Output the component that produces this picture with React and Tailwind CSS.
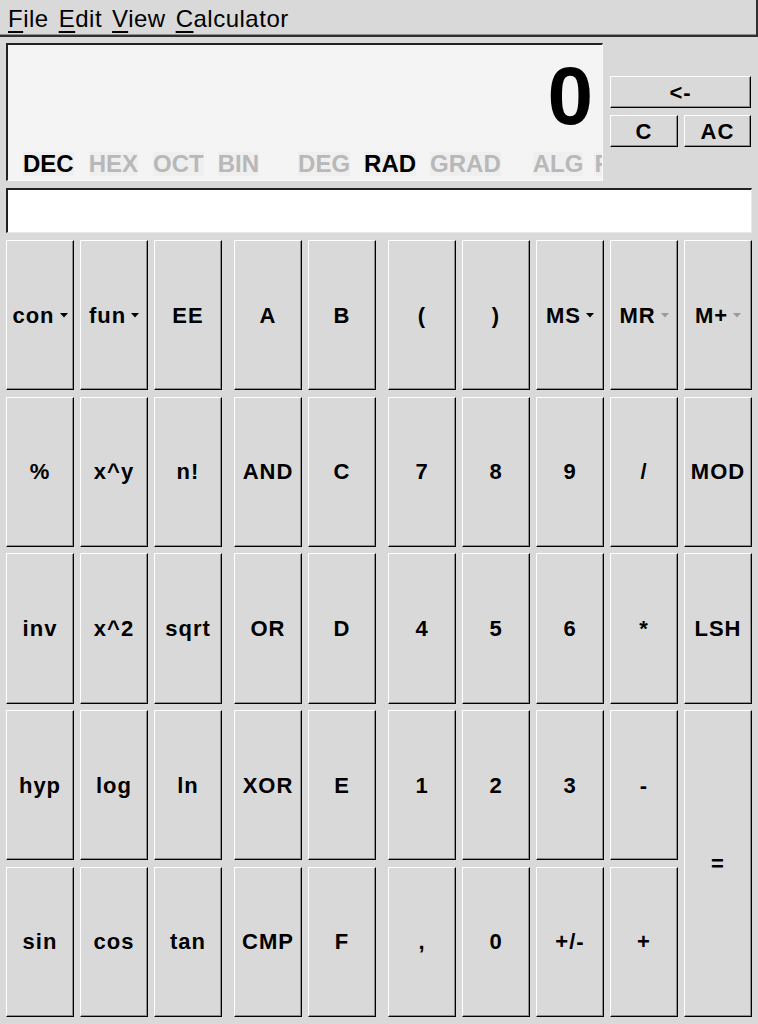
import React from "react";

const Tri = ({ gray }) => (
  <svg width="8" height="5" viewBox="0 0 8 5" className="ml-[5px] mt-[1px]">
    <path d="M0 0 L8 0 L4 4.5 Z" fill={gray ? "#9a9a9a" : "#000"} />
  </svg>
);

const btnBase =
  "flex items-center justify-center bg-[#d9d9d9] border-t border-l border-t-white border-l-white border-b border-r border-b-black border-r-black shadow-[inset_-1px_-1px_0_#8c8c8c] text-[22px] font-bold text-black tracking-[1px]";

const keys = [
  // row 1
  { t: "con", c: "col-start-1 row-start-1", tri: "b" },
  { t: "fun", c: "col-start-2 row-start-1", tri: "b" },
  { t: "EE", c: "col-start-3 row-start-1" },
  { t: "A", c: "col-start-5 row-start-1" },
  { t: "B", c: "col-start-6 row-start-1" },
  { t: "(", c: "col-start-8 row-start-1" },
  { t: ")", c: "col-start-9 row-start-1" },
  { t: "MS", c: "col-start-10 row-start-1", tri: "b" },
  { t: "MR", c: "col-start-11 row-start-1", tri: "g" },
  { t: "M+", c: "col-start-12 row-start-1", tri: "g" },
  // row 2
  { t: "%", c: "col-start-1 row-start-2" },
  { t: "x^y", c: "col-start-2 row-start-2" },
  { t: "n!", c: "col-start-3 row-start-2" },
  { t: "AND", c: "col-start-5 row-start-2" },
  { t: "C", c: "col-start-6 row-start-2" },
  { t: "7", c: "col-start-8 row-start-2" },
  { t: "8", c: "col-start-9 row-start-2" },
  { t: "9", c: "col-start-10 row-start-2" },
  { t: "/", c: "col-start-11 row-start-2" },
  { t: "MOD", c: "col-start-12 row-start-2" },
  // row 3
  { t: "inv", c: "col-start-1 row-start-3" },
  { t: "x^2", c: "col-start-2 row-start-3" },
  { t: "sqrt", c: "col-start-3 row-start-3" },
  { t: "OR", c: "col-start-5 row-start-3" },
  { t: "D", c: "col-start-6 row-start-3" },
  { t: "4", c: "col-start-8 row-start-3" },
  { t: "5", c: "col-start-9 row-start-3" },
  { t: "6", c: "col-start-10 row-start-3" },
  { t: "*", c: "col-start-11 row-start-3" },
  { t: "LSH", c: "col-start-12 row-start-3" },
  // row 4
  { t: "hyp", c: "col-start-1 row-start-4" },
  { t: "log", c: "col-start-2 row-start-4" },
  { t: "ln", c: "col-start-3 row-start-4" },
  { t: "XOR", c: "col-start-5 row-start-4" },
  { t: "E", c: "col-start-6 row-start-4" },
  { t: "1", c: "col-start-8 row-start-4" },
  { t: "2", c: "col-start-9 row-start-4" },
  { t: "3", c: "col-start-10 row-start-4" },
  { t: "-", c: "col-start-11 row-start-4" },
  { t: "=", c: "col-start-12 row-start-4 row-span-2" },
  // row 5
  { t: "sin", c: "col-start-1 row-start-5" },
  { t: "cos", c: "col-start-2 row-start-5" },
  { t: "tan", c: "col-start-3 row-start-5" },
  { t: "CMP", c: "col-start-5 row-start-5" },
  { t: "F", c: "col-start-6 row-start-5" },
  { t: ",", c: "col-start-8 row-start-5" },
  { t: "0", c: "col-start-9 row-start-5" },
  { t: "+/-", c: "col-start-10 row-start-5" },
  { t: "+", c: "col-start-11 row-start-5" },
];

const Label = ({ children, on, ml }) => (
  <span className={`bg-[#efefef] shrink-0 ${ml} ${on ? "text-black" : "text-[#b8b8b8]"}`}>{children}</span>
);

const U = ({ children }) => (
  <span className="underline underline-offset-[4px] decoration-[2px]">{children}</span>
);

export default function App() {
  return (
    <div
      className="w-[758px] h-[1024px] bg-[#d9d9d9] overflow-hidden"
      style={{ fontFamily: '"Liberation Sans", Arial, sans-serif' }}
    >
      {/* menubar */}
      <div className="h-[37px] border-b-2 border-r-2 border-b-[#303030] border-r-[#303030] shadow-[inset_0_-1px_0_#8c8c8c] flex items-center pl-[8px] gap-[10px] text-[24px] tracking-[0.5px] text-black leading-none pt-[2px]">
        <span><U>F</U>ile</span>
        <span><U>E</U>dit</span>
        <span><U>V</U>iew</span>
        <span><U>C</U>alculator</span>
      </div>

      <div className="px-[6px] pt-[6px]">
        {/* top area */}
        <div className="flex gap-[7px]">
          <div className="w-[597px] h-[138px] bg-[#f4f4f4] border-t-2 border-l-2 border-t-[#222] border-l-[#222] border-b border-r border-b-[#fafafa] border-r-[#fafafa] overflow-hidden flex flex-col">
            <div className="pt-[10px] pr-[9px] text-right text-[82px] font-bold leading-none text-black">0</div>
            <div className="mt-[15px] flex text-[24px] font-bold leading-none whitespace-nowrap">
              <Label on ml="ml-[15px]">DEC</Label>
              <Label ml="ml-[15px]">HEX</Label>
              <Label ml="ml-[15px]">OCT</Label>
              <Label ml="ml-[14px]">BIN</Label>
              <Label ml="ml-[39px]">DEG</Label>
              <Label on ml="ml-[14px]">RAD</Label>
              <Label ml="ml-[14px]">GRAD</Label>
              <Label ml="ml-[32px]">ALG</Label>
              <Label ml="ml-[11px]">RPN</Label>
            </div>
          </div>
          <div className="w-[141px] pt-[33px] flex flex-col gap-[7px]">
            <button className={`${btnBase} h-[32px] w-full text-[21px]`}>&lt;-</button>
            <div className="flex gap-[6px]">
              <button className={`${btnBase} h-[32px] w-[68px] text-[21px]`}>C</button>
              <button className={`${btnBase} h-[32px] flex-1 text-[21px]`}>AC</button>
            </div>
          </div>
        </div>

        {/* input line */}
        <div className="mt-[7px] h-[45px] bg-white border-t-2 border-l-2 border-t-[#222] border-l-[#222] border-b border-r border-b-[#e8e8e8] border-r-[#e8e8e8]"></div>

        {/* keypad */}
        <div className="mt-[7px] h-[777px] grid grid-cols-[68px_68px_68px_0px_68px_68px_0px_68px_68px_68px_68px_68px] grid-rows-5 gap-x-[6px] gap-y-[6.7px]">
          {keys.map((k) => (
            <button key={k.t + k.c} className={`${btnBase} ${k.c}`}>
              <span>{k.t}</span>
              {k.tri && <Tri gray={k.tri === "g"} />}
            </button>
          ))}
        </div>
      </div>
    </div>
  );
}
